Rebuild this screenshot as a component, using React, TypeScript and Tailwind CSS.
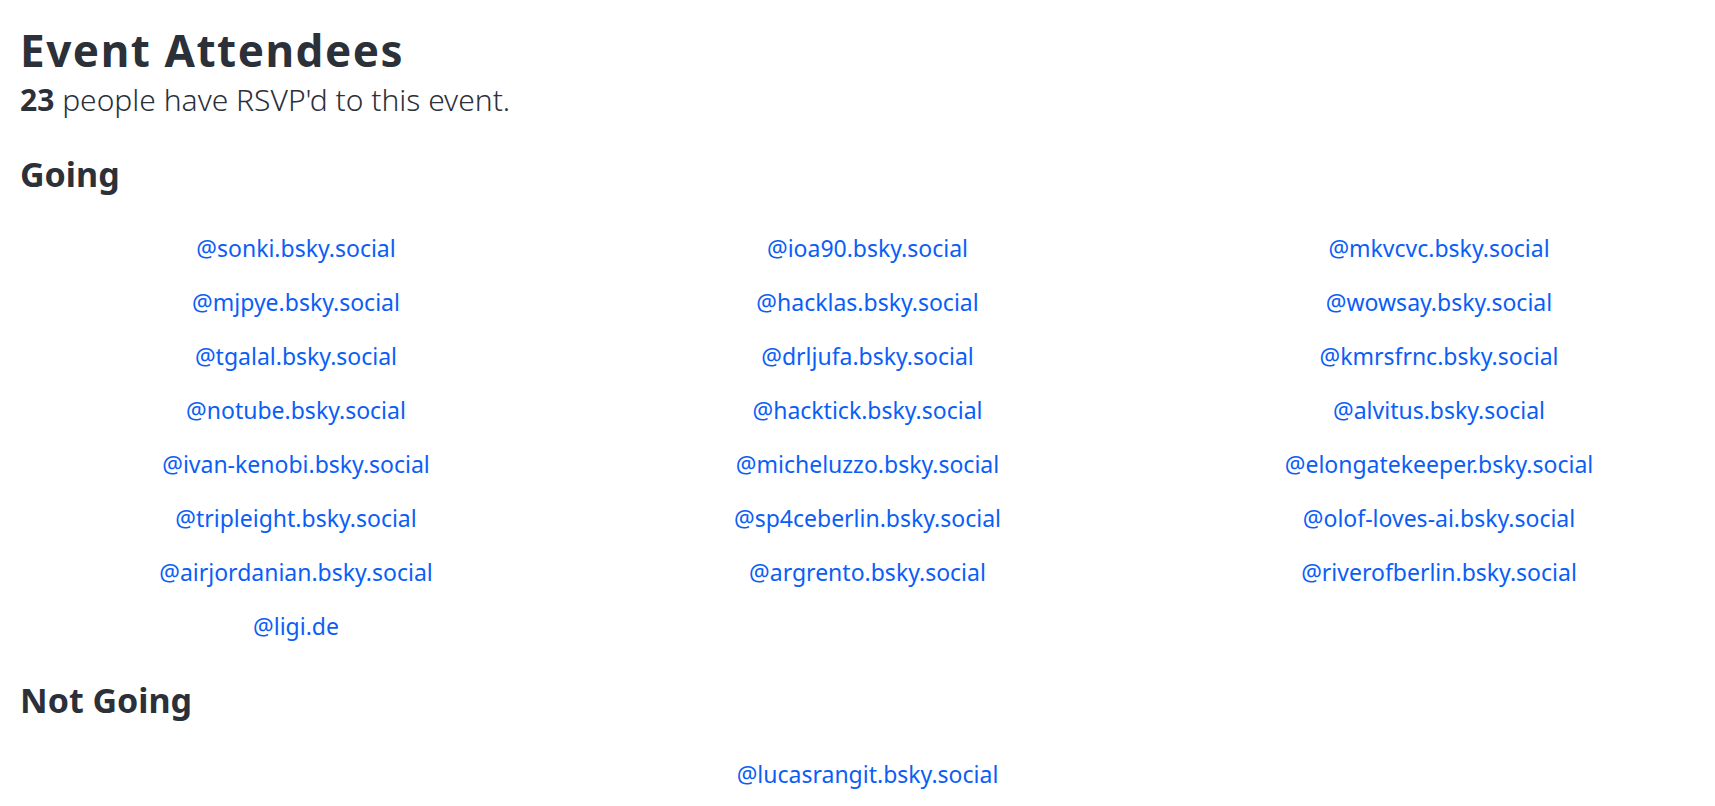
const going = [
  'sonki.bsky.social',
  'ioa90.bsky.social',
  'mkvcvc.bsky.social',
  'mjpye.bsky.social',
  'hacklas.bsky.social',
  'wowsay.bsky.social',
  'tgalal.bsky.social',
  'drljufa.bsky.social',
  'kmrsfrnc.bsky.social',
  'notube.bsky.social',
  'hacktick.bsky.social',
  'alvitus.bsky.social',
  'ivan-kenobi.bsky.social',
  'micheluzzo.bsky.social',
  'elongatekeeper.bsky.social',
  'tripleight.bsky.social',
  'sp4ceberlin.bsky.social',
  'olof-loves-ai.bsky.social',
  'airjordanian.bsky.social',
  'argrento.bsky.social',
  'riverofberlin.bsky.social',
  'ligi.de',
];

const notGoing = ['lucasrangit.bsky.social'];

function Handle({ handle, className = '' }: { handle: string; className?: string }) {
  return (
    <div className={`h-[54px] flex items-center justify-center ${className}`}>
      <a href="#" className="text-[23px] leading-[30px] text-[#0b5ef5]">
        @{handle}
      </a>
    </div>
  );
}

export default function App() {
  return (
    <div className="min-h-screen bg-white pl-5 pt-[24px] font-['Noto_Sans',sans-serif] text-[#2b3039]">
      <h1 className="text-[44px] font-bold leading-[52px] tracking-[0.035em]">Event Attendees</h1>
      <p className="mt-[6px] text-[30px] font-light leading-[36px]">
        <strong className="font-bold">23</strong> people have RSVP'd to this event.
      </p>

      {/* Going */}
      <h2 className="mt-[36px] text-[34px] font-bold leading-[40px]">Going</h2>
      <div className="mt-[27px] grid grid-cols-3 gap-x-[19.5px]">
        {going.map((h) => (
          <Handle key={h} handle={h} />
        ))}
      </div>

      {/* Not Going */}
      <h2 className="mt-[27px] text-[34px] font-bold leading-[40px]">Not Going</h2>
      <div className="mt-[27px] grid grid-cols-3 gap-x-[19.5px]">
        {notGoing.map((h) => (
          <Handle key={h} handle={h} className="col-start-2" />
        ))}
      </div>
    </div>
  );
}
